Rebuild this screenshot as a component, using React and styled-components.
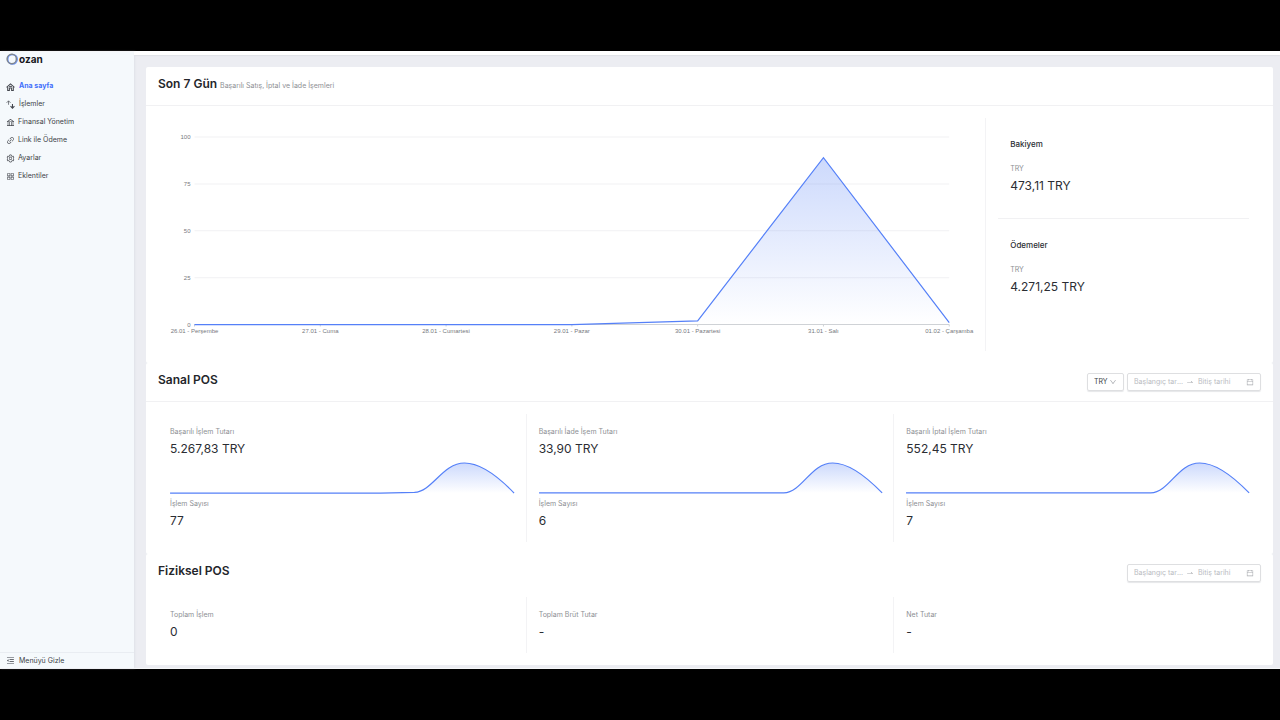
import React from 'react'
import styled, { createGlobalStyle } from 'styled-components'
import {
    AiOutlineAppstore,
    AiOutlineBank,
    AiOutlineCalendar,
    AiOutlineDown,
    AiOutlineLink,
    AiOutlineMenuFold,
    AiOutlineSetting,
    AiOutlineSwapRight,
} from 'react-icons/ai'

const GlobalStyle = createGlobalStyle`
    * {
        box-sizing: border-box;
    }

    body {
        margin: 0;
        background: #000;
        color: #2b2d33;
        font-family: Inter, "Liberation Sans", sans-serif;
        font-size: 7px;
        line-height: 12px;
    }
`

const Page = styled.div`
    min-height: 100vh;
    padding: 51px 0 50px;
`

const Shell = styled.div`
    display: flex;
    background: #ecedf2;
    border-top: 1px solid #fff;
    border-bottom: 1px solid #f6f7f9;
`

const Sidebar = styled.aside`
    flex: 0 0 134px;
    display: flex;
    flex-direction: column;
    background: #f5f9fc;
    box-shadow: 1px 0 2px #dfe2e8;
`

const Logo = styled.a`
    display: flex;
    align-items: center;
    gap: 1px;
    height: 25px;
    padding: 0 6px 11px;
    color: #15171c;
    font-size: 10px;
    font-weight: 700;
    text-decoration: none;

    svg {
        width: 12px;
        height: 12px;
    }
`

const Nav = styled.nav`
    flex: 1;
`

const NavLink = styled.a`
    display: flex;
    align-items: center;
    gap: ${props => (props.$wide ? '4px' : '3px')};
    height: 18px;
    padding: 0 6px;
    color: ${props => (props.$active ? '#3f6ffb' : '#3c3f46')};
    font-weight: ${props => (props.$active ? 700 : 400)};
    text-decoration: none;

    svg {
        width: 9px;
        height: 9px;
        color: #44474e;
    }
`

const HideMenu = styled.button`
    display: flex;
    align-items: center;
    gap: 4px;
    height: 16px;
    padding: 0 6px;
    border: 0;
    border-top: 1px solid #e9edf2;
    background: none;
    color: #3c3f46;
    font: inherit;

    svg {
        width: 9px;
        height: 9px;
    }
`

const Main = styled.div`
    flex: 1;
    min-width: 0;
`

const TopBar = styled.header`
    height: 3px;
    background: #fff;
    box-shadow: 0 1px 1px #e0e2e7;
`

const Content = styled.main`
    padding: 12px 7px 3px 12px;
`

const Card = styled.section`
    background: #fff;
    border-radius: 2px;
`

const CardHeader = styled.div`
    display: flex;
    justify-content: space-between;
    align-items: flex-start;
    min-height: 39px;
    padding: 10px 12px;
    border-bottom: 1px solid ${props => (props.$plain ? 'transparent' : '#f1f1f3')};
`

const CardTitle = styled.h2`
    margin: 0;
    color: #24262b;
    font-size: 12px;
    font-weight: 600;
    line-height: 14px;
`

const Subtitle = styled.small`
    margin-left: 3px;
    color: #8d8f94;
    font-size: 7px;
    font-weight: 400;
`

const CardBody = styled.div`
    display: grid;
    grid-template-columns: ${props => props.$columns};
    padding: ${props => (props.$tight ? '4px' : '12px')} 12px 12px;
`

const Column = styled.div`
    min-width: 0;
    padding: 12px;

    & + & {
        border-left: 1px solid #f3f3f5;
    }
`

const Balances = styled.div`
    border-left: 1px solid #f3f3f5;
    padding: 0 12px;
`

const Balance = styled.div`
    padding: 20px 12px 23px;

    & + & {
        border-top: 1px solid #f1f1f3;
    }
`

const BalanceTitle = styled.h3`
    margin: 0 0 13px;
    font-size: 8px;
    font-weight: 500;
    line-height: 12px;
`

const Label = styled.div`
    color: #8d8f94;
`

const Value = styled.div`
    margin-top: 2px;
    font-size: 12px;
    line-height: 18px;
`

const Chart = styled.svg`
    display: block;
    width: 100%;
    height: auto;
    overflow: visible;
    font-family: "Liberation Sans", Arial, sans-serif;
    font-size: 6px;
`

const Controls = styled.div`
    display: flex;
    gap: 3px;
`

const Field = styled.div`
    display: flex;
    align-items: center;
    height: 18px;
    padding: 0 6px;
    border: 1px solid #dedfe1;
    border-radius: 2px;
    box-shadow: 0 1px 1px #e6e7e9;
    color: #a9abb0;

    svg {
        flex: none;
        width: 8px;
        height: 8px;
    }
`

const Select = styled.select`
    appearance: none;
    width: 15px;
    padding: 0;
    border: 0;
    background: none;
    color: #3c3f46;
    font: inherit;
`

const DateInput = styled.input`
    width: ${props => (props.$end ? '48px' : '49px')};
    padding: 0;
    border: 0;
    outline: 0;
    background: none;
    font: inherit;
    text-overflow: ellipsis;

    &::placeholder {
        color: #b9bbbf;
        opacity: 1;
    }
`

const RangeArrow = styled(AiOutlineSwapRight)`
    margin: 0 4px 0 3px;
`

const HomeIcon = () => (
    <svg viewBox="0 0 16 16" fill="none" stroke="currentColor" strokeWidth="1.8">
        <path d="M1 9.500 8 3.500l7 6" />
        <path d="M3 9v6h3v-4.500h4V15h3V9" />
        <path d="M5.500 7.800h5" />
    </svg>
)

const TransferIcon = () => (
    <svg viewBox="0 0 16 16" fill="none" stroke="currentColor" strokeWidth="1.5">
        <path d="M4.500 1.500v7M1 5l3.500-3.500L8 5" strokeOpacity="0.8" />
        <path d="M11.500 7v7M8 11l3.500 3.500L15 11" strokeWidth="1.9" />
    </svg>
)

const OzanMark = () => (
    <svg viewBox="0 0 24 24" fill="none">
        <circle cx="13" cy="12.500" r="9.500" stroke="#6f96f7" strokeWidth="3" />
        <circle cx="11.500" cy="12" r="9.300" stroke="#7f8690" strokeWidth="3" />
    </svg>
)

const menu = [
    { text: 'Ana sayfa', icon: <HomeIcon />, active: true, wide: true },
    { text: 'İşlemler', icon: <TransferIcon />, wide: true },
    { text: 'Finansal Yönetim', icon: <AiOutlineBank /> },
    { text: 'Link ile Ödeme', icon: <AiOutlineLink /> },
    { text: 'Ayarlar', icon: <AiOutlineSetting /> },
    { text: 'Eklentiler', icon: <AiOutlineAppstore /> },
]

const week = [
    { day: '26.01 - Perşembe', count: 0 },
    { day: '27.01 - Cuma', count: 0 },
    { day: '28.01 - Cumartesi', count: 0 },
    { day: '29.01 - Pazar', count: 0 },
    { day: '30.01 - Pazartesi', count: 2 },
    { day: '31.01 - Salı', count: 89 },
    { day: '01.02 - Çarşamba', count: 1 },
]

const virtualPos = [
    { label: 'Başarılı İşlem Tutarı', total: '5.267,83 TRY', count: '77', rise: true },
    { label: 'Başarılı İade İşem Tutarı', total: '33,90 TRY', count: '6' },
    { label: 'Başarılı İptal İşlem Tutarı', total: '552,45 TRY', count: '7' },
]

const physicalPos = [
    { label: 'Toplam İşlem', total: '0' },
    { label: 'Toplam Brüt Tutar', total: '-' },
    { label: 'Net Tutar', total: '-' },
]

const BASE = 194.5
const xAt = i => 24.5 + i * 125.75
const yAt = v => BASE - v * 1.875

const WeekChart = () => {
    const line = week.map((d, i) => `${xAt(i)} ${yAt(d.count)}`).join(' L')

    return (
        <Chart viewBox="0 0 803 209" role="img" aria-label="Son 7 Gün">
            <defs>
                <linearGradient id="weekFill" x1="0" y1="0" x2="0" y2="1">
                    <stop offset="0" stopColor="#4a78f5" stopOpacity="0.28" />
                    <stop offset="1" stopColor="#4a78f5" stopOpacity="0" />
                </linearGradient>
            </defs>
            {[100, 75, 50, 25, 0].map(v => (
                <g key={v}>
                    <line x1="24.5" x2="779" y1={yAt(v)} y2={yAt(v)} stroke={v ? '#f1f1f3' : '#cfd2d6'} />
                    <text x="20.500" y={yAt(v) + 2} textAnchor="end" fill="#77797e">{v}</text>
                </g>
            ))}
            {week.map((d, i) => (
                <g key={d.day}>
                    <line x1={xAt(i)} x2={xAt(i)} y1={BASE} y2={BASE + 2} stroke="#cfd2d6" />
                    <text x={xAt(i)} y="203" textAnchor="middle" fill="#77797e">{d.day}</text>
                </g>
            ))}
            <path d={`M${line} L${xAt(6)} ${BASE} L${xAt(0)} ${BASE}Z`} fill="url(#weekFill)" />
            <path d={`M${line}`} fill="none" stroke="#5580f8" strokeWidth="1.2" />
        </Chart>
    )
}

const TrendChart = ({ rise }) => {
    const start = rise ? 'M0 35H210L244 34.300C262 33.500 272 5 294 5' : 'M0 35H245C264 34 272 5 294 5'
    const line = `${start}C312 5 330 21 343.500 35`

    return (
        <Chart viewBox="0 0 343 40" aria-hidden="true">
            <defs>
                <linearGradient id="trendFill" x1="0" y1="0" x2="0" y2="1">
                    <stop offset="0" stopColor="#4a78f5" stopOpacity="0.28" />
                    <stop offset="1" stopColor="#4a78f5" stopOpacity="0" />
                </linearGradient>
            </defs>
            <path d={`${line}Z`} fill="url(#trendFill)" />
            <path d={line} fill="none" stroke="#5580f8" strokeWidth="1.2" />
        </Chart>
    )
}

const DateRange = () => (
    <Field>
        <DateInput placeholder="Başlangıç tarihi" aria-label="Başlangıç tarihi" />
        <RangeArrow />
        <DateInput $end placeholder="Bitiş tarihi" aria-label="Bitiş tarihi" />
        <AiOutlineCalendar />
    </Field>
)

const App = () => (
    <Page>
        <GlobalStyle />
        <Shell>
            <Sidebar>
                <Logo href="#"><OzanMark />ozan</Logo>
                <Nav>
                    {menu.map(item => (
                        <NavLink href="#" key={item.text} $active={item.active} $wide={item.wide}>
                            {item.icon}
                            {item.text}
                        </NavLink>
                    ))}
                </Nav>
                <HideMenu type="button"><AiOutlineMenuFold />Menüyü Gizle</HideMenu>
            </Sidebar>
            <Main>
                <TopBar />
                <Content>
                    <Card>
                        <CardHeader>
                            <CardTitle>Son 7 Gün<Subtitle>Başarılı Satış, İptal ve İade İşemleri</Subtitle></CardTitle>
                        </CardHeader>
                        <CardBody $columns="3fr 1fr">
                            <Column><WeekChart /></Column>
                            <Balances>
                                <Balance>
                                    <BalanceTitle>Bakiyem</BalanceTitle>
                                    <Label>TRY</Label>
                                    <Value>473,11 TRY</Value>
                                </Balance>
                                <Balance>
                                    <BalanceTitle>Ödemeler</BalanceTitle>
                                    <Label>TRY</Label>
                                    <Value>4.271,25 TRY</Value>
                                </Balance>
                            </Balances>
                        </CardBody>
                    </Card>
                    <Card>
                        <CardHeader>
                            <CardTitle>Sanal POS</CardTitle>
                            <Controls>
                                <Field>
                                    <Select aria-label="Para birimi" defaultValue="TRY">
                                        <option>TRY</option>
                                    </Select>
                                    <AiOutlineDown />
                                </Field>
                                <DateRange />
                            </Controls>
                        </CardHeader>
                        <CardBody $columns="repeat(3, 1fr)">
                            {virtualPos.map(item => (
                                <Column key={item.label}>
                                    <Label>{item.label}</Label>
                                    <Value>{item.total}</Value>
                                    <TrendChart rise={item.rise} />
                                    <Label>İşlem Sayısı</Label>
                                    <Value>{item.count}</Value>
                                </Column>
                            ))}
                        </CardBody>
                    </Card>
                    <Card>
                        <CardHeader $plain>
                            <CardTitle>Fiziksel POS</CardTitle>
                            <DateRange />
                        </CardHeader>
                        <CardBody $columns="repeat(3, 1fr)" $tight>
                            {physicalPos.map(item => (
                                <Column key={item.label}>
                                    <Label>{item.label}</Label>
                                    <Value>{item.total}</Value>
                                </Column>
                            ))}
                        </CardBody>
                    </Card>
                </Content>
            </Main>
        </Shell>
    </Page>
)

export default App
